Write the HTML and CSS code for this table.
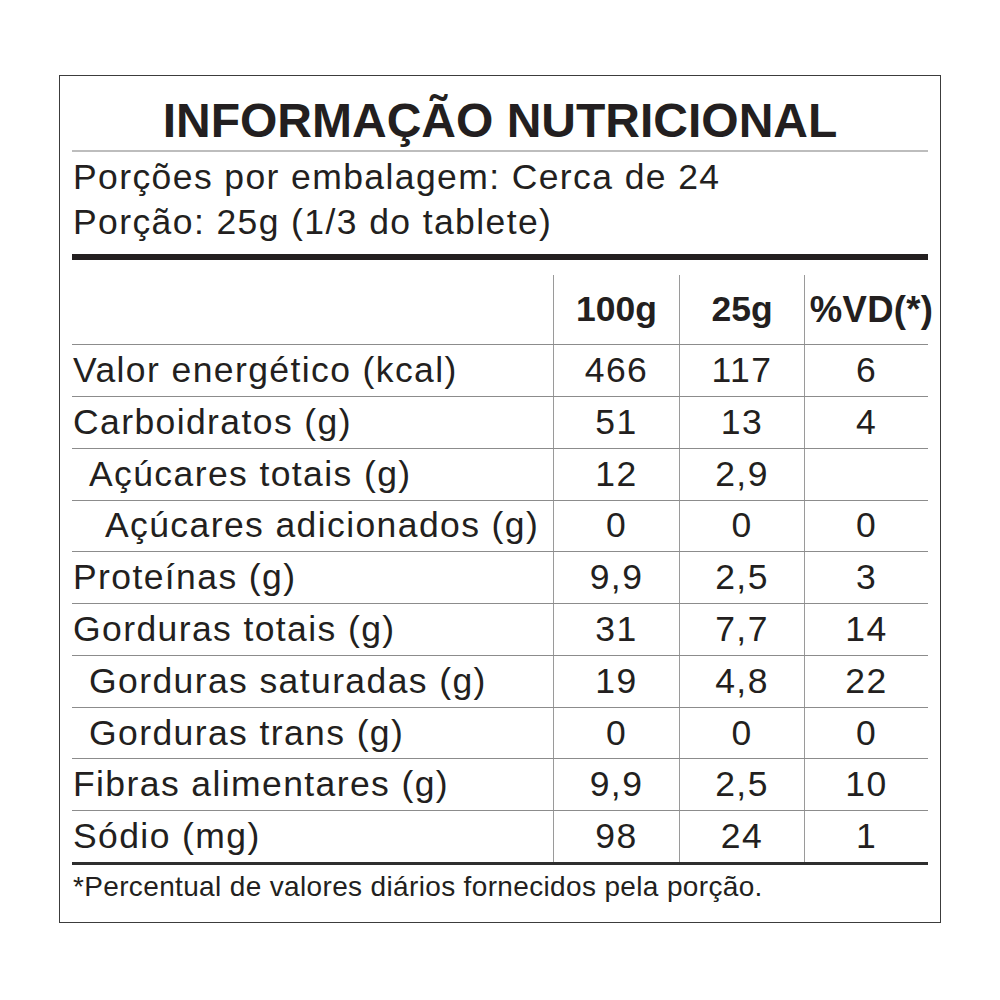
FILE: index.html
```html
<!DOCTYPE html>
<html lang="pt-BR">
<head>
<meta charset="utf-8">
<title>Informação Nutricional</title>
<link rel="stylesheet" href="styles.css">
</head>
<body>
<div class="label">
  <h1 class="title">INFORMAÇÃO NUTRICIONAL</h1>
  <div class="serving">
    <div class="serving-line">Porções por embalagem: Cerca de 24</div>
    <div class="serving-line">Porção: 25g (1/3 do tablete)</div>
  </div>
  <div class="table">
    <div class="row head">
      <div class="cell name"></div>
      <div class="cell num">100g</div>
      <div class="cell num">25g</div>
      <div class="cell num vd">%VD(*)</div>
    </div>
    <div class="row">
      <div class="cell name">Valor energético (kcal)</div>
      <div class="cell num">466</div><div class="cell num">117</div><div class="cell num">6</div>
    </div>
    <div class="row">
      <div class="cell name">Carboidratos (g)</div>
      <div class="cell num">51</div><div class="cell num">13</div><div class="cell num">4</div>
    </div>
    <div class="row">
      <div class="cell name indent1">Açúcares totais (g)</div>
      <div class="cell num">12</div><div class="cell num">2,9</div><div class="cell num"></div>
    </div>
    <div class="row">
      <div class="cell name indent2">Açúcares adicionados (g)</div>
      <div class="cell num">0</div><div class="cell num">0</div><div class="cell num">0</div>
    </div>
    <div class="row">
      <div class="cell name">Proteínas (g)</div>
      <div class="cell num">9,9</div><div class="cell num">2,5</div><div class="cell num">3</div>
    </div>
    <div class="row">
      <div class="cell name">Gorduras totais (g)</div>
      <div class="cell num">31</div><div class="cell num">7,7</div><div class="cell num">14</div>
    </div>
    <div class="row">
      <div class="cell name indent1">Gorduras saturadas (g)</div>
      <div class="cell num">19</div><div class="cell num">4,8</div><div class="cell num">22</div>
    </div>
    <div class="row">
      <div class="cell name indent1">Gorduras trans (g)</div>
      <div class="cell num">0</div><div class="cell num">0</div><div class="cell num">0</div>
    </div>
    <div class="row">
      <div class="cell name">Fibras alimentares (g)</div>
      <div class="cell num">9,9</div><div class="cell num">2,5</div><div class="cell num">10</div>
    </div>
    <div class="row last">
      <div class="cell name">Sódio (mg)</div>
      <div class="cell num">98</div><div class="cell num">24</div><div class="cell num">1</div>
    </div>
  </div>
  <p class="footnote">*Percentual de valores diários fornecidos pela porção.</p>
</div>
</body>
</html>
```

FILE: styles.css
```css
html, body {
  margin: 0;
  padding: 0;
  background: #ffffff;
}

body {
  font-family: "Liberation Sans", Arial, sans-serif;
  color: #231f20;
}

.label {
  box-sizing: border-box;
  margin: 75px 0 0 59px;
  width: 882px;
  height: 848px;
  border: 1px solid #3c3c3c;
  padding: 0 12px;
}

.title {
  margin: 0;
  padding: 18px 0 2.5px;
  font-size: 48px;
  font-weight: bold;
  line-height: 1.117;
  text-align: center;
  border-bottom: 2px solid #bdbdbd;
}

.serving {
  padding: 2.5px 0 9.5px 1px;
  border-bottom: 6px solid #231f20;
}

.serving-line {
  font-size: 35.5px;
  line-height: 45px;
  letter-spacing: 1.4px;
  white-space: nowrap;
}

.table {
  margin-top: 15px;
}

.row {
  display: grid;
  grid-template-columns: 481px 126px 125px 124px;
  height: 51.8px;
  box-sizing: border-box;
  border-bottom: 1px solid #8c8c8c;
}

.row.head {
  height: 70px;
  font-weight: bold;
}

.row.head .num {
  letter-spacing: 0;
  font-size: 35.5px;
}

.row.head .vd {
  font-size: 36.5px;
  letter-spacing: 0.3px;
  padding-left: 10px;
}

.row.last {
  height: 54px;
  border-bottom: 3px solid #2e2e2e;
}

.cell {
  display: flex;
  align-items: center;
  font-size: 35.5px;
  letter-spacing: 1.4px;
  white-space: nowrap;
}

.name {
  padding-left: 1px;
}

.name.indent1 {
  padding-left: 17px;
}

.name.indent2 {
  padding-left: 33px;
}

.num {
  justify-content: center;
  border-left: 1px solid #9a9a9a;
}

.footnote {
  margin: 6px 0 0 1px;
  font-size: 28px;
  line-height: 32px;
  letter-spacing: 0.35px;
  white-space: nowrap;
}
```
